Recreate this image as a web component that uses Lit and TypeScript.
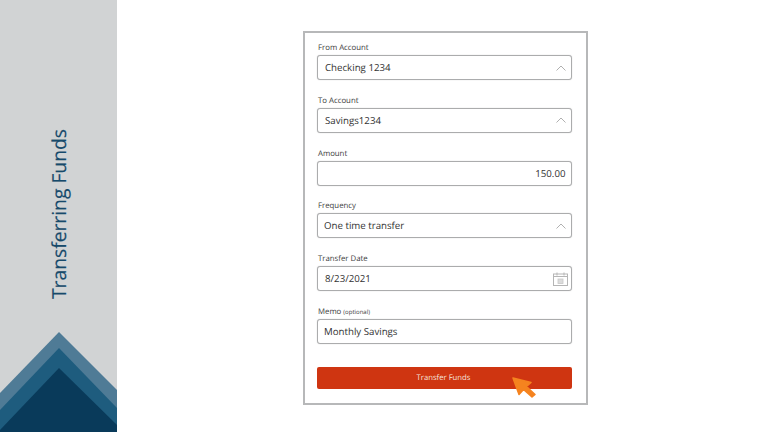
import { LitElement, html, css, svg } from "lit";
import { customElement } from "lit/decorators.js";

const chevron = html`<svg class="chev" viewBox="0 0 10 6" width="10" height="6"><path d="M0.5 5.5 L5 1 L9.5 5.5" fill="none" stroke="#b0b0b0" stroke-width="1"/></svg>`;
const calendar = html`<svg class="cal" viewBox="0 0 15 14" width="15" height="14">
  <rect x="0.5" y="2" width="14" height="11.5" fill="none" stroke="#b5b5b5" stroke-width="1"/>
  <path d="M0.5 4.5 H14.5 M4 0.5 V3.5 M11 0.5 V3.5" fill="none" stroke="#b5b5b5" stroke-width="1"/>
  <rect x="5" y="7" width="5" height="4.5" fill="#dcdcdc" stroke="#c8c8c8" stroke-width="0.8"/>
</svg>`;

@customElement("app-root")
export class AppRoot extends LitElement {
  static styles = css`
    :host { display: flex; width: 768px; height: 432px; background: #fff; font-family: "Open Sans", sans-serif; overflow: hidden; text-rendering: geometricPrecision; }
    .side { position: relative; width: 117px; flex: none; background: #d1d3d4; display: flex; justify-content: center; align-items: flex-start; padding-top: 129px; box-sizing: border-box; }
    .title { writing-mode: vertical-rl; transform: rotate(180deg); font-size: 19.3px; line-height: 20px; color: #174a6b; white-space: nowrap; -webkit-text-stroke: 0.15px #174a6b; }
    .peaks { position: absolute; left: 0; bottom: 0; }
    .main { flex: 1; display: flex; justify-content: flex-start; align-items: flex-start; padding: 31px 0 0 186px; }
    .card { position: relative; width: 285px; height: 374px; box-sizing: border-box; border: 2px solid #b7b8b9; padding: 8px 14px 0 12px; display: flex; flex-direction: column; gap: 13.8px; }
    .field { display: flex; flex-direction: column; }
    label { height: 14px; line-height: 14.6px; font-size: 7.8px; color: #3c3c3c; padding-left: 1px; }
    label small { font-size: 6px; }
    .control { height: 25px; box-sizing: border-box; border: 1px solid #abacad; box-shadow: 0 0 1px #b8b9ba; border-radius: 3px; display: flex; align-items: center; justify-content: space-between; padding: 0 5.5px 0 6.5px; font-size: 9.7px; color: #333; background: #fff; }
    .control.right { justify-content: flex-end; }
    .control.inset { padding-left: 7px; }
    .control.tight { padding-left: 6px; }
    .chev { flex: none; }
    .cal { flex: none; margin-right: -2px; }
    button { margin-top: 9.2px; height: 22px; border: none; border-radius: 2px; background: #cf3511; color: #f6e3dc; font: 7.7px "Open Sans", sans-serif; padding: 1px 2px 0 0; text-rendering: geometricPrecision; }
    .cursor { position: absolute; left: 205px; top: 342px; }
  `;

  render() {
    return html`
      <div class="side">
        <div class="title">Transferring Funds</div>
        <svg class="peaks" width="117" height="100" viewBox="0 0 117 100">
          ${svg`<polygon points="0,61 59,0 117,58 117,100 0,100" fill="#4f7b96"/>
          <polygon points="0,78 59,16 117,76 117,100 0,100" fill="#1e5c7e"/>
          <polygon points="0,98 59,36 117,93 117,100 0,100" fill="#093a5a"/>`}
        </svg>
      </div>
      <div class="main">
        <div class="card">
          <div class="field"><label>From Account</label><div class="control inset"><span>Checking 1234</span>${chevron}</div></div>
          <div class="field"><label>To Account</label><div class="control inset"><span>Savings1234</span>${chevron}</div></div>
          <div class="field"><label>Amount</label><div class="control right"><span>150.00</span></div></div>
          <div class="field"><label>Frequency</label><div class="control tight"><span>One time transfer</span>${chevron}</div></div>
          <div class="field"><label>Transfer Date</label><div class="control inset"><span>8/23/2021</span>${calendar}</div></div>
          <div class="field"><label>Memo <small>(optional)</small></label><div class="control tight"><span>Monthly Savings</span></div></div>
          <button>Transfer Funds</button>
          <svg class="cursor" width="28" height="24" viewBox="0 0 28 24">
            <path d="M3 3 L21 7.5 L16.5 11.5 L25 19.5 L22 22 L13.5 14.5 L9 19.5 Z" fill="#f5831f" stroke="#f5831f" stroke-width="1.5" stroke-linejoin="round"/>
          </svg>
        </div>
      </div>
    `;
  }
}
